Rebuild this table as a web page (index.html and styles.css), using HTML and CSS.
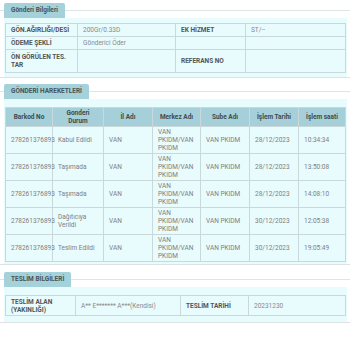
FILE: index.html
```html
<!DOCTYPE html>
<html lang="tr">
<head>
<meta charset="utf-8">
<link rel="stylesheet" href="styles.css">
</head>
<body>
<section class="sec sec-first">
  <div class="sec-head"><span class="tab">Gönderi Bilgileri</span></div>
  <div class="panel p1">
    <table class="info">
      <colgroup><col style="width:72px"><col style="width:98px"><col style="width:70px"><col></colgroup>
      <tr class="r13"><th>GÖN.AĞIRLIĞI/DESİ</th><td>200Gr/0.33D</td><th>EK HİZMET</th><td>ST/--</td></tr>
      <tr class="r13"><th>ÖDEME ŞEKLİ</th><td>Gönderici Öder</td><td></td><td></td></tr>
      <tr class="r23"><th>ÖN GÖRÜLEN TES. TAR</th><td></td><th>REFERANS NO</th><td></td></tr>
    </table>
  </div>
  <div class="rule"></div>
</section>

<section class="sec sec-second">
  <div class="sec-head"><span class="tab">GÖNDERİ HAREKETLERİ</span></div>
  <div class="panel p2">
    <table class="moves">
      <colgroup><col style="width:47px"><col style="width:51px"><col style="width:49px"><col style="width:48px"><col style="width:49px"><col style="width:49px"><col></colgroup>
      <tr class="hd"><th>Barkod No</th><th>Gonderi<br>Durum</th><th>İl Adı</th><th>Merkez Adı</th><th>Sube Adı</th><th>İşlem Tarihi</th><th>İşlem saati</th></tr>
      <tr><td>278261376893</td><td>Kabul Edildi</td><td>VAN</td><td>VAN PKIDM/VAN PKIDM</td><td>VAN PKIDM</td><td>28/12/2023</td><td>10:34:34</td></tr>
      <tr><td>278261376893</td><td>Taşımada</td><td>VAN</td><td>VAN PKIDM/VAN PKIDM</td><td>VAN PKIDM</td><td>28/12/2023</td><td>13:50:08</td></tr>
      <tr><td>278261376893</td><td>Taşımada</td><td>VAN</td><td>VAN PKIDM/VAN PKIDM</td><td>VAN PKIDM</td><td>28/12/2023</td><td>14:08:10</td></tr>
      <tr><td>278261376893</td><td>Dağıtıcıya Verildi</td><td>VAN</td><td>VAN PKIDM/VAN PKIDM</td><td>VAN PKIDM</td><td>30/12/2023</td><td>12:05:38</td></tr>
      <tr><td>278261376893</td><td>Teslim Edildi</td><td>VAN</td><td>VAN PKIDM/VAN PKIDM</td><td>VAN PKIDM</td><td>30/12/2023</td><td>19:05:49</td></tr>
    </table>
  </div>
  <div class="rule"></div>
</section>

<section class="sec sec-third">
  <div class="sec-head"><span class="tab">TESLİM BİLGİLERİ</span></div>
  <div class="panel p3">
    <table class="info">
      <colgroup><col style="width:70px"><col style="width:105px"><col style="width:68px"><col></colgroup>
      <tr class="r20"><th>TESLİM ALAN (YAKINLIĞI)</th><td>A** E******* A***(Kendisi)</td><th>TESLİM TARİHİ</th><td>20231230</td></tr>
    </table>
  </div>
  <div class="rule"></div>
</section>
</body>
</html>
```

FILE: styles.css
```css
html, body {
  margin: 0;
  padding: 0;
  background: #ffffff;
  font-family: Roboto, "Liberation Sans", sans-serif;
  font-size: 6.5px;
  color: #888;
}

.sec-first { padding-top: 3px; }
.sec-second { padding-top: 6px; }
.sec-third { padding-top: 7px; }

.sec-head {
  display: flex;
  align-items: center;
  height: 15px;
}
.sec-head::before {
  content: "";
  width: 4px;
  border-top: 1px solid #dde5e7;
}
.sec-head::after {
  content: "";
  flex: 1;
  border-top: 1px solid #dde5e7;
}
.tab {
  display: block;
  height: 15px;
  line-height: 15px;
  padding: 0 7px;
  background: #a4d1da;
  border-radius: 2px 2px 0 0;
  color: #4a5356;
  font-weight: bold;
  font-size: 6.5px;
  white-space: nowrap;
}

.panel {
  background: #e8fbfd;
  margin: 0 3px 0 4px;
  padding: 0 1px;
}
.p1 { padding-top: 5px; padding-bottom: 4px; }
.p2 { padding-top: 8px; padding-bottom: 2px; }
.p3 { padding-top: 8px; padding-bottom: 6px; }

.rule {
  border-top: 1px solid #dde3e5;
}

table {
  width: 100%;
  border-collapse: collapse;
  table-layout: fixed;
}
th, td {
  border: 1px solid #c9d8db;
  padding: 1px 5px;
  text-align: left;
  vertical-align: middle;
  line-height: 8px;
}
.info th {
  color: #555;
  font-weight: bold;
}
.info td {
  color: #8a8a8a;
}
.r13 { height: 13px; }
.r23 { height: 23px; }
.r20 { height: 20px; }

.moves tr { height: 27px; }
.moves tr.hd { height: 18px; }
.moves .hd th {
  background: #a6d0d9;
  color: #3f4b4e;
  font-weight: bold;
  text-align: center;
  padding: 1px 2px;
}
.moves td {
  color: #808080;
  white-space: normal;
  padding: 0 5px;
}
.moves td:first-child {
  white-space: nowrap;
  overflow: visible;
}
```
